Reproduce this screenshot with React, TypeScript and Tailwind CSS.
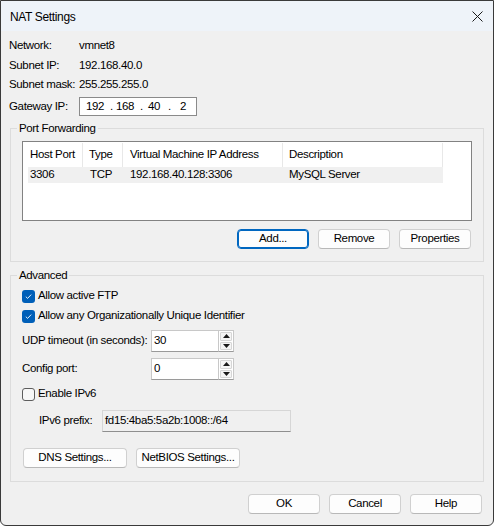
import React from "react";

const font = { fontFamily: '"Segoe UI", "Liberation Sans", Arial, sans-serif' };

function Btn({ children, w = "w-[72px]", focus = false }: { children: React.ReactNode; w?: string; focus?: boolean }) {
  return (
    <div
      className={`${w} h-[20px] flex items-center justify-center rounded-[4px] bg-[#fdfdfd] leading-none text-black border ${
        focus ? "border-[#0067c0] shadow-[inset_0_0_0_1px_#0067c0]" : "border-[#d0d0d0] border-b-[#b8b8b8]"
      }`}
    >
      {children}
    </div>
  );
}

function Check({ checked }: { checked: boolean }) {
  return checked ? (
    <div className="w-[13px] h-[13px] rounded-[3px] bg-[#005fb8] flex items-center justify-center shrink-0">
      <svg width="9" height="9" viewBox="0 0 9 9">
        <path d="M1.8 4.7 L3.6 6.4 L7.2 2.6" fill="none" stroke="white" strokeWidth="0.9" />
      </svg>
    </div>
  ) : (
    <div className="w-[13px] h-[13px] rounded-[3px] border border-[#5d5d5d] bg-[#f7f7f7] shrink-0" />
  );
}

function Spin({ value }: { value: string }) {
  return (
    <div className="flex h-[22px]">
      <div className="w-[67px] h-[22px] bg-white border border-[#c8c8c8] border-b-[#9a9a9a] border-r-0 flex items-center pl-[2px]">
        {value}
      </div>
      <div className="w-[16px] h-[22px] flex flex-col bg-white border border-[#c8c8c8] border-b-[#9a9a9a] p-[1px] gap-[1px]">
        <div className="flex-1 bg-[#f5f5f5] border border-[#d6d6d6] rounded-[1px] flex items-center justify-center">
          <svg width="7" height="4" viewBox="0 0 7 4"><path d="M0 4 L3.5 0 L7 4 Z" fill="#1a1a1a" /></svg>
        </div>
        <div className="flex-1 bg-[#f5f5f5] border border-[#d6d6d6] rounded-[1px] flex items-center justify-center">
          <svg width="7" height="4" viewBox="0 0 7 4"><path d="M0 0 L3.5 4 L7 0 Z" fill="#1a1a1a" /></svg>
        </div>
      </div>
    </div>
  );
}

function Group({ title, children, className = "" }: { title: string; children: React.ReactNode; className?: string }) {
  return (
    <div className={`mx-[9px] w-[474px] border border-[#dcdcdc] ${className}`}>
      <div className="-mt-[9px] ml-[6px] w-fit px-[2px] bg-[#f0f0f0] h-[16px] leading-[16px]">{title}</div>
      {children}
    </div>
  );
}

export default function App() {
  return (
    <div
      style={font}
      className="w-[494px] h-[526px] border border-[#3a3a3a] rounded-b-[6px] bg-[#f0f0f0] text-[11.5px] tracking-[-0.35px] whitespace-nowrap text-black overflow-hidden flex flex-col"
    >
      {/* Title bar */}
      <div className="h-[30px] bg-[#eef3f9] flex items-center justify-between pl-[9px] pr-[10px] pt-[1px] shrink-0">
        <span className="text-[12px]">NAT Settings</span>
        <svg width="11" height="11" viewBox="0 0 11 11">
          <path d="M0.5 0.5 L10.5 10.5 M10.5 0.5 L0.5 10.5" stroke="#1a1a1a" strokeWidth="1" />
        </svg>
      </div>

      {/* Info rows */}
      <div className="pl-[8px] pt-[5px] flex flex-col">
        <div className="h-[20px] flex items-center">
          <span className="w-[70px]">Network:</span>
          <span>vmnet8</span>
        </div>
        <div className="h-[19px] flex items-center">
          <span className="w-[70px]">Subnet IP:</span>
          <span>192.168.40.0</span>
        </div>
        <div className="h-[20px] flex items-center">
          <span className="w-[70px]">Subnet mask:</span>
          <span>255.255.255.0</span>
        </div>
        <div className="h-[19px] mt-[2px] flex items-center">
          <span className="w-[70px]">Gateway IP:</span>
          <div className="w-[118px] h-[19px] bg-white border border-[#8a8a8a] flex items-center pl-[6px]">
            <span className="w-[24px]">192</span>
            <span className="w-[6px]">.</span>
            <span className="w-[24px]">168</span>
            <span className="w-[8px]">.</span>
            <span className="w-[20px]">40</span>
            <span className="w-[12px]">.</span>
            <span>2</span>
          </div>
        </div>
      </div>

      {/* Port Forwarding */}
      <Group title="Port Forwarding" className="mt-[12px] h-[134px]">
        <div className="ml-[11px] mt-[5px] w-[450px] h-[80px] bg-white border border-[#828282] pt-[1px]">
          <div className="flex h-[24px] items-center">
            <div className="w-[60px] h-full pl-[7px] flex items-center border-r border-[#e8e8e8]">Host Port</div>
            <div className="w-[40px] h-full pl-[6px] flex items-center border-r border-[#e8e8e8]">Type</div>
            <div className="w-[160px] h-full pl-[7px] flex items-center border-r border-[#e8e8e8]">Virtual Machine IP Address</div>
            <div className="w-[160px] h-full pl-[6px] flex items-center border-r border-[#e8e8e8]">Description</div>
          </div>
          <div className="flex h-[16px] items-center ml-[5px] w-[415px] bg-[#f0f0f0]">
            <div className="w-[55px] pl-[2px]">3306</div>
            <div className="w-[40px] pl-[7px]">TCP</div>
            <div className="w-[160px] pl-[7px]">192.168.40.128:3306</div>
            <div className="pl-[6px]">MySQL Server</div>
          </div>
        </div>
        <div className="flex justify-end gap-[9px] mt-[8px] mr-[12px]">
          <Btn focus>Add...</Btn>
          <Btn>Remove</Btn>
          <Btn>Properties</Btn>
        </div>
      </Group>

      {/* Advanced */}
      <Group title="Advanced" className="mt-[13px] h-[207px]">
        <div className="pl-[11px] flex flex-col">
          <div className="h-[20px] mt-[3px] flex items-center gap-[3px]">
            <Check checked />
            <span>Allow active FTP</span>
          </div>
          <div className="h-[20px] flex items-center gap-[3px]">
            <Check checked />
            <span>Allow any Organizationally Unique Identifier</span>
          </div>
          <div className="h-[22px] mt-[4px] flex items-center">
            <span className="w-[129px]">UDP timeout (in seconds):</span>
            <Spin value="30" />
          </div>
          <div className="h-[22px] mt-[6px] flex items-center">
            <span className="w-[129px]">Config port:</span>
            <Spin value="0" />
          </div>
          <div className="h-[20px] mt-[4px] flex items-center gap-[3px]">
            <Check checked={false} />
            <span>Enable IPv6</span>
          </div>
          <div className="h-[22px] mt-[6px] flex items-center pl-[17px]">
            <span className="w-[63px]">IPv6 prefix:</span>
            <div className="w-[189px] h-[22px] bg-[#f0f0f0] border border-[#d6d6d6] border-b-[#8f8f8f] flex items-center pl-[2px]">
              fd15:4ba5:5a2b:1008::/64
            </div>
          </div>
          <div className="flex gap-[9px] mt-[16px] ml-[1px]">
            <Btn w="w-[104px]">DNS Settings...</Btn>
            <Btn w="w-[104px]">NetBIOS Settings...</Btn>
          </div>
        </div>
      </Group>

      {/* Bottom buttons */}
      <div className="flex justify-end gap-[9px] mt-[12px] mr-[11px]">
        <Btn>OK</Btn>
        <Btn>Cancel</Btn>
        <Btn>Help</Btn>
      </div>
    </div>
  );
}
